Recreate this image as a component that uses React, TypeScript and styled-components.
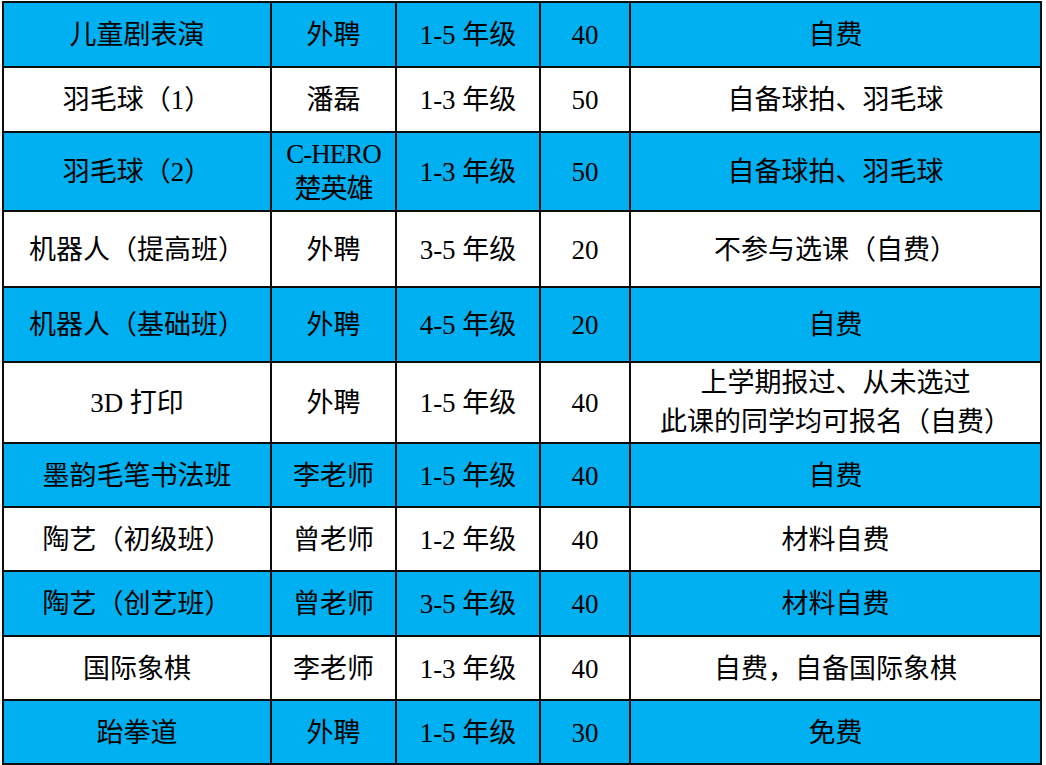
import React from 'react';
import styled, { createGlobalStyle } from 'styled-components';

type Course = {
  name: string;
  teacher: string[];
  grade: string;
  count: string;
  note: string[];
  height: number;
};

const courses: Course[] = [
  { name: '儿童剧表演', teacher: ['外聘'], grade: '1-5 年级', count: '40', note: ['自费'], height: 65 },
  { name: '羽毛球（1）', teacher: ['潘磊'], grade: '1-3 年级', count: '50', note: ['自备球拍、羽毛球'], height: 65 },
  { name: '羽毛球（2）', teacher: ['C-HERO', '楚英雄'], grade: '1-3 年级', count: '50', note: ['自备球拍、羽毛球'], height: 79 },
  { name: '机器人（提高班）', teacher: ['外聘'], grade: '3-5 年级', count: '20', note: ['不参与选课（自费）'], height: 76 },
  { name: '机器人（基础班）', teacher: ['外聘'], grade: '4-5 年级', count: '20', note: ['自费'], height: 75 },
  { name: '3D 打印', teacher: ['外聘'], grade: '1-5 年级', count: '40', note: ['上学期报过、从未选过', '此课的同学均可报名（自费）'], height: 81 },
  { name: '墨韵毛笔书法班', teacher: ['李老师'], grade: '1-5 年级', count: '40', note: ['自费'], height: 64 },
  { name: '陶艺（初级班）', teacher: ['曾老师'], grade: '1-2 年级', count: '40', note: ['材料自费'], height: 64 },
  { name: '陶艺（创艺班）', teacher: ['曾老师'], grade: '3-5 年级', count: '40', note: ['材料自费'], height: 65 },
  { name: '国际象棋', teacher: ['李老师'], grade: '1-3 年级', count: '40', note: ['自费，自备国际象棋'], height: 64 },
  { name: '跆拳道', teacher: ['外聘'], grade: '1-5 年级', count: '30', note: ['免费'], height: 64 },
];

const columnWidths = [268, 125, 144, 90, 411];

const GlobalStyle = createGlobalStyle`
  html, body {
    margin: 0;
    padding: 0;
    background: #ffffff;
  }
`;

const Page = styled.div`
  width: 1046px;
  height: 765px;
  overflow: hidden;
  padding: 1px 0 0 2px;
  box-sizing: border-box;
`;

const Table = styled.table`
  border-collapse: collapse;
  table-layout: fixed;
  width: 1039px;
  font-family: 'Liberation Serif', 'Noto Sans CJK SC', serif;
  font-size: 27px;
  color: #000;
`;

const Row = styled.tr<{ $shaded: boolean }>`
  background: ${({ $shaded }) => ($shaded ? '#00b0f0' : '#ffffff')};
`;

const Cell = styled.td`
  border: 2px solid #0d0d0d;
  padding: 1px 0 0;
  text-align: center;
  vertical-align: middle;
  line-height: 36px;
  white-space: nowrap;
`;

const Line = styled.div<{ $tight?: boolean }>`
  line-height: ${({ $tight }) => ($tight ? '35px' : '39px')};
  letter-spacing: ${({ $tight }) => ($tight ? '-1px' : '0')};
`;

function Lines({ items, tight }: { items: string[]; tight?: boolean }) {
  if (items.length === 1) return <>{items[0]}</>;
  return (
    <>
      {items.map((item) => (
        <Line key={item} $tight={tight}>
          {item}
        </Line>
      ))}
    </>
  );
}

export default function App() {
  return (
    <>
      <GlobalStyle />
      <Page>
        <Table>
          <colgroup>
            {columnWidths.map((w, i) => (
              <col key={i} style={{ width: w }} />
            ))}
          </colgroup>
          <tbody>
            {courses.map((c, i) => (
              <Row key={c.name} $shaded={i % 2 === 0} style={{ height: c.height }}>
                <Cell>{c.name}</Cell>
                <Cell>
                  <Lines items={c.teacher} tight />
                </Cell>
                <Cell>{c.grade}</Cell>
                <Cell>{c.count}</Cell>
                <Cell>
                  <Lines items={c.note} />
                </Cell>
              </Row>
            ))}
          </tbody>
        </Table>
      </Page>
    </>
  );
}
